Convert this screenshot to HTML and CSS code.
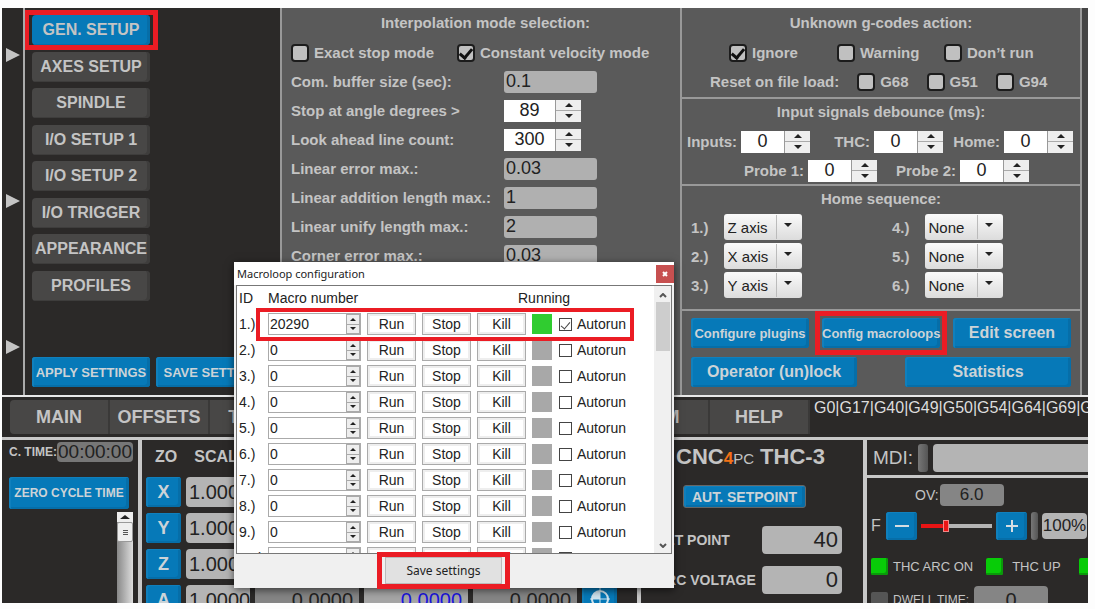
FILE: index.html
```html
<!DOCTYPE html>
<html lang="en">

<head>
    <meta charset="utf-8">
    <meta name="viewport" content="width=device-width, initial-scale=1.0">
    <title>CNC control - general setup</title>
    <link rel="stylesheet" href="styles.css">
</head>

<body>
    <div class="app">
        <main class="setup">
            <div class="rail">
                <span class="rail-arrow"></span>
                <span class="rail-arrow"></span>
                <span class="rail-arrow"></span>
            </div>

            <section class="sidebar">
                <nav class="setup-menu">
                    <button class="menu-item active marked">GEN. SETUP</button>
                    <button class="menu-item">AXES SETUP</button>
                    <button class="menu-item">SPINDLE</button>
                    <button class="menu-item">I/O SETUP 1</button>
                    <button class="menu-item">I/O SETUP 2</button>
                    <button class="menu-item">I/O TRIGGER</button>
                    <button class="menu-item">APPEARANCE</button>
                    <button class="menu-item">PROFILES</button>
                </nav>
                <div class="sidebar-actions">
                    <button class="blue">APPLY SETTINGS</button>
                    <button class="blue">SAVE SETTINGS</button>
                </div>
            </section>

            <section class="interpolation">
                <h2>Interpolation mode selection:</h2>
                <div class="modes">
                    <label class="check"><input type="checkbox">Exact stop mode</label>
                    <label class="check"><input type="checkbox" checked>Constant velocity mode</label>
                </div>
                <div class="row">
                    <label for="buffer">Com. buffer size (sec):</label>
                    <input id="buffer" class="field" type="text" value="0.1">
                </div>
                <div class="row">
                    <label for="angle">Stop at angle degrees &gt;</label>
                    <span class="spinner wide"><input id="angle" type="text" value="89"></span>
                </div>
                <div class="row">
                    <label for="lookahead">Look ahead line count:</label>
                    <span class="spinner wide"><input id="lookahead" type="text" value="300"></span>
                </div>
                <div class="row">
                    <label for="linerror">Linear error max.:</label>
                    <input id="linerror" class="field" type="text" value="0.03">
                </div>
                <div class="row">
                    <label for="linadd">Linear addition length max.:</label>
                    <input id="linadd" class="field" type="text" value="1">
                </div>
                <div class="row">
                    <label for="linunify">Linear unify length max.:</label>
                    <input id="linunify" class="field" type="text" value="2">
                </div>
                <div class="row">
                    <label for="corner">Corner error max.:</label>
                    <input id="corner" class="field" type="text" value="0.03">
                </div>
            </section>

            <section class="options">
                <div class="box gcodes">
                    <h2>Unknown g-codes action:</h2>
                    <div class="actions">
                        <label class="check"><input type="checkbox" checked>Ignore</label>
                        <label class="check"><input type="checkbox">Warning</label>
                        <label class="check"><input type="checkbox">Don’t run</label>
                    </div>
                    <div class="reset">
                        <span>Reset on file load:</span>
                        <label class="check"><input type="checkbox">G68</label>
                        <label class="check"><input type="checkbox">G51</label>
                        <label class="check"><input type="checkbox">G94</label>
                    </div>
                </div>

                <div class="box debounce">
                    <h2>Input signals debounce (ms):</h2>
                    <div class="signals">
                        <label>Inputs: <span class="spinner"><input type="text" value="0"></span></label>
                        <label>THC: <span class="spinner"><input type="text" value="0"></span></label>
                        <label>Home: <span class="spinner"><input type="text" value="0"></span></label>
                    </div>
                    <div class="probes">
                        <label>Probe 1: <span class="spinner"><input type="text" value="0"></span></label>
                        <label>Probe 2: <span class="spinner"><input type="text" value="0"></span></label>
                    </div>
                </div>

                <div class="box home">
                    <h2>Home sequence:</h2>
                    <div class="sequence">
                        <label>1.) <span class="drop"><select><option>Z axis</option></select></span></label>
                        <label>4.) <span class="drop"><select><option>None</option></select></span></label>
                        <label>2.) <span class="drop"><select><option>X axis</option></select></span></label>
                        <label>5.) <span class="drop"><select><option>None</option></select></span></label>
                        <label>3.) <span class="drop"><select><option>Y axis</option></select></span></label>
                        <label>6.) <span class="drop"><select><option>None</option></select></span></label>
                    </div>
                </div>

                <div class="box tools">
                    <div class="tools-row">
                        <button class="blue small">Configure plugins</button>
                        <button class="blue small marked">Config macroloops</button>
                        <button class="blue">Edit screen</button>
                    </div>
                    <div class="tools-row two">
                        <button class="blue">Operator (un)lock</button>
                        <button class="blue">Statistics</button>
                    </div>
                </div>
            </section>
            <div class="edge"></div>
        </main>

        <nav class="tabs">
            <button>MAIN</button>
            <button>OFFSETS</button>
            <button>TOOLS</button>
            <button></button>
            <button></button>
            <button></button>
            <button>CAM</button>
            <button>HELP</button>
            <p class="gstate">G0|G17|G40|G49|G50|G54|G64|G69|G90</p>
        </nav>

        <div class="status">
            <section class="cycle">
                <div class="cycle-time">
                    <label for="ctime">C. TIME:</label>
                    <input id="ctime" type="text" value="00:00:00" readonly>
                </div>
                <button class="blue">ZERO CYCLE TIME</button>
                <div class="log-scroll">
                    <span class="log-up"></span>
                    <span class="log-thumb"></span>
                </div>
            </section>

            <section class="dro">
                <div class="dro-head">
                    <span>ZO</span>
                    <span>SCALE</span>
                </div>
                <div class="axis"><button class="blue">X</button><output class="scale">1.0000</output></div>
                <div class="axis"><button class="blue">Y</button><output class="scale">1.0000</output></div>
                <div class="axis"><button class="blue">Z</button><output class="scale">1.0000</output></div>
                <div class="axis">
                    <button class="blue">A</button>
                    <output class="scale">1.0000</output>
                    <output class="pos">0.0000</output>
                    <output class="pos work">0.0000</output>
                    <output class="pos">0.0000</output>
                    <button class="blue zero" aria-label="Zero axis">
                        <svg width="22" height="22" viewBox="0 0 22 22">
                            <circle cx="11" cy="12" r="8" fill="none" stroke="#cfe3ee" stroke-width="2" />
                            <path d="M11 12V4A8 8 0 0 0 3 12Z" fill="#cfe3ee" />
                            <path d="M11 1V22M1 12H21" stroke="#cfe3ee" stroke-width="1" />
                        </svg>
                    </button>
                </div>
            </section>

            <section class="thc">
                <h1>CNC<em>4</em><small>PC</small> THC-3</h1>
                <button class="blue setpoint">AUT. SETPOINT</button>
                <div class="reading">
                    <label for="sp">SET POINT</label>
                    <input id="sp" type="text" value="40">
                </div>
                <div class="reading">
                    <label for="av">ARC VOLTAGE</label>
                    <input id="av" type="text" value="0">
                </div>
            </section>

            <section class="control">
                <div class="mdi">
                    <label for="mdi">MDI:</label>
                    <span class="lamp"></span>
                    <input id="mdi" type="text">
                </div>
                <div class="override">
                    <label for="ov">OV:</label>
                    <input id="ov" type="text" value="6.0">
                </div>
                <div class="feed">
                    <label for="feed">F</label>
                    <button class="blue" aria-label="Slower">
                        <svg width="16" height="16" viewBox="0 0 16 16"><path d="M1 8H15" stroke="#d4dde2" stroke-width="2" /></svg>
                    </button>
                    <input id="feed" type="range" min="0" max="100" value="34">
                    <button class="blue" aria-label="Faster">
                        <svg width="16" height="16" viewBox="0 0 16 16"><path d="M2 8H14M8 2V14" stroke="#d4dde2" stroke-width="2" /></svg>
                    </button>
                    <span class="lamp"></span>
                    <output>100%</output>
                </div>
                <div class="leds">
                    <span class="led on"></span><span class="led-text">THC ARC ON</span>
                    <span class="led on"></span><span class="led-text up">THC UP</span>
                    <span class="led on"></span>
                </div>
                <div class="dwell">
                    <span class="led"></span>
                    <label for="dwell">DWELL TIME:</label>
                    <input id="dwell" type="text" value="0">
                </div>
            </section>
        </div>

        <section id="modal">
            <header>
                <h3>Macroloop configuration</h3>
                <button class="close" aria-label="Close">
                    <svg width="6" height="6" viewBox="0 0 6 6"><path d="M1 1L5 5M5 1L1 5" stroke="#fff" stroke-width="2" /></svg>
                </button>
            </header>
            <div class="list">
                <table>
                    <colgroup>
                        <col class="c-id">
                        <col class="c-macro">
                        <col class="c-btn">
                        <col class="c-btn">
                        <col class="c-btn">
                        <col class="c-led">
                        <col>
                    </colgroup>
                    <thead>
                        <tr>
                            <th>ID</th>
                            <th>Macro number</th>
                            <th></th>
                            <th></th>
                            <th class="h-running" colspan="3">Running</th>
                        </tr>
                    </thead>
                    <tbody class="macros"></tbody>
                </table>
                <div class="scrollbar">
                    <svg width="8" height="5" viewBox="0 0 8 5"><path d="M1 4L4 1L7 4" fill="none" stroke="#555" stroke-width="2" /></svg>
                    <span class="thumb"></span>
                    <svg width="8" height="5" viewBox="0 0 8 5"><path d="M1 1L4 4L7 1" fill="none" stroke="#555" stroke-width="2" /></svg>
                </div>
            </div>
            <footer>
                <button class="save marked">Save settings</button>
            </footer>
        </section>
    </div>

    <template class="macro-template">
        <tr>
            <td class="data-id"></td>
            <td><span class="spinner"><input class="data-macro" type="text"></span></td>
            <td><button>Run</button></td>
            <td><button>Stop</button></td>
            <td><button>Kill</button></td>
            <td><span class="running"></span></td>
            <td><label><input type="checkbox">Autorun</label></td>
        </tr>
    </template>

    <script>
        let dest = document.querySelector(".macros");
        let temp = document.querySelector(".macro-template");
        let macros = [20290, 0, 0, 0, 0, 0, 0, 0, 0, 0];

        macros.forEach((macro, i) => {
            let klon = temp.content.cloneNode(true);
            klon.querySelector(".data-id").textContent = (i + 1) + ".)";
            klon.querySelector(".data-macro").value = macro;
            klon.querySelector(".data-macro").setAttribute("aria-label", "Macro " + (i + 1));
            if (macro) {
                klon.querySelector("tr").classList.add("marked");
                klon.querySelector(".running").classList.add("on");
                klon.querySelector("[type=checkbox]").checked = true;
            }
            dest.appendChild(klon);
        });

        // up and down buttons for every number box
        document.querySelectorAll(".spinner").forEach(spinner => {
            let input = spinner.querySelector("input");
            let arrows = document.createElement("span");
            arrows.className = "arrows";
            [1, -1].forEach(step => {
                let knap = document.createElement("button");
                knap.className = step > 0 ? "up" : "down";
                knap.setAttribute("aria-label", step > 0 ? "Up" : "Down");
                knap.addEventListener("click", () => {
                    input.value = Number(input.value) + step;
                });
                arrows.appendChild(knap);
            });
            spinner.appendChild(arrows);
        });
    </script>
</body>

</html>
```
FILE: styles.css
```css
* {
    box-sizing: border-box;
}

body {
    margin: 0;
    padding: 8px 7px 6px 2px;
    height: 100vh;
    background-color: #fdfdfd;
    font-family: "Liberation Sans", Arial, sans-serif;
    font-weight: bold;
    font-size: 15px;
    color: #c4c4c4;
}

button,
input,
select {
    font: inherit;
    color: inherit;
    border: none;
    padding: 0;
    margin: 0;
    min-width: 0;
}

h1,
h2,
h3,
p {
    margin: 0;
    font: inherit;
}

.app {
    position: relative;
    height: 100%;
    overflow: hidden;
    display: flex;
    flex-direction: column;
    background-color: #2b2928;
}

.blue {
    height: 30px;
    background-color: #0679b8;
    border-radius: 3px;
    box-shadow: inset 2px 1px 0 #1080bd, inset -3px -2px 0 #066ea8;
    color: #ccd3d7;
    white-space: nowrap;
}

.marked {
    position: relative;
}

.marked::after {
    content: "";
    position: absolute;
    inset: -7px;
    border: 5px solid #eb1c24;
    pointer-events: none;
}

/* setup page */

.setup {
    display: flex;
    height: 389px;
    border-bottom: 2px solid #e8e8e8;
}

.rail {
    flex: none;
    width: 23px;
    border-right: 2px solid #aaa;
    display: flex;
    flex-direction: column;
    gap: 132px;
    padding: 40px 0 0 4px;
}

.rail-arrow {
    width: 0;
    border-left: 14px solid #c4c4c4;
    border-top: 7px solid transparent;
    border-bottom: 7px solid transparent;
}

.sidebar {
    flex: none;
    width: 257px;
    padding: 7px 0 8px 7px;
    display: flex;
    flex-direction: column;
    justify-content: space-between;
    border-right: 2px solid #999;
    overflow: hidden;
}

.setup-menu {
    width: 118px;
    height: 286px;
    display: flex;
    flex-direction: column;
    justify-content: space-between;
}

.menu-item {
    height: 30px;
    background-color: #484746;
    border-radius: 4px;
    box-shadow: inset -3px -1px 0 #3e3d3c;
    font-size: 16px;
    white-space: nowrap;
}

.menu-item.active {
    background-color: #0679b8;
    box-shadow: inset -3px -1px 0 #066ea8;
}

.menu-item.marked::after {
    inset: -5px -8px;
}

.sidebar-actions {
    display: flex;
    gap: 6px;
}

.sidebar-actions .blue {
    flex: 0 0 118px;
    font-size: 13px;
}

.interpolation {
    flex: 1;
    padding-left: 9px;
    background-color: #5a5a5a;
}

h2 {
    height: 30px;
    line-height: 30px;
    text-align: center;
}

.modes,
.row {
    display: flex;
    align-items: center;
    height: 29px;
    white-space: nowrap;
}

.modes {
    gap: 23px;
}

.check {
    display: flex;
    align-items: center;
    gap: 5px;
    white-space: nowrap;
}

.check input {
    appearance: none;
    width: 18px;
    height: 18px;
    border: 2px solid #1c1c1c;
    border-radius: 4px;
    background-color: #c0c0c0;
    display: grid;
    place-items: center;
}

.check input:checked::before {
    content: "";
    width: 5px;
    height: 10px;
    border: solid #111;
    border-width: 0 3px 3px 0;
    transform: rotate(40deg);
}

.row label {
    width: 213px;
}

.field {
    width: 93px;
    height: 22px;
    padding-left: 2px;
    border-radius: 3px;
    background-color: #b0b0b0;
    color: #222;
    font-size: 18px;
    font-weight: normal;
}

.spinner {
    display: inline-flex;
    width: 69px;
    height: 22px;
    background-color: #fff;
}

.spinner.wide {
    width: 77px;
}

.spinner input {
    flex: 1;
    background-color: transparent;
    color: #222;
    font-size: 18px;
    font-weight: normal;
    text-align: center;
}

.arrows {
    width: 26px;
    display: flex;
    flex-direction: column;
    gap: 1px;
    border-left: 1px solid #999;
    background-color: #aaa;
}

.arrows button {
    flex: 1;
    display: grid;
    place-items: center;
    background-color: #eee;
}

.arrows button::before {
    content: "";
    border: solid transparent;
    border-width: 0 4px 4px;
    border-bottom-color: #222;
}

.arrows .down::before {
    border-width: 4px 4px 0;
    border-top-color: #222;
}

.options {
    flex: none;
    width: 402px;
    background-color: #5a5a5a;
    border: solid #999;
    border-width: 0 2px;
}

.box + .box {
    border-top: 2px solid #999;
}

.gcodes {
    height: 89px;
}

.actions,
.reset {
    display: flex;
    align-items: center;
    height: 29px;
}

.actions {
    display: grid;
    grid-template-columns: 108px 107px 1fr;
    padding-left: 47px;
}

.reset {
    gap: 18px;
    padding-left: 28px;
}

.debounce {
    height: 87px;
}

.debounce h2 {
    height: 28px;
    line-height: 26px;
}

.signals,
.probes {
    display: grid;
    align-items: center;
    justify-items: end;
    height: 29px;
    padding-right: 7px;
}

.signals {
    grid-template-columns: 128px 133px 1fr;
}

.probes {
    grid-template-columns: 195px 152px;
}

.signals label,
.probes label {
    display: flex;
    align-items: center;
    gap: 4px;
}

.home {
    height: 125px;
}

.home h2 {
    height: 28px;
    line-height: 26px;
}

.sequence {
    display: grid;
    grid-template-columns: 201px 1fr;
    gap: 3px 0;
    padding-left: 9px;
}

.sequence label {
    display: flex;
    align-items: center;
}

.drop {
    position: relative;
    width: 78px;
    height: 26px;
    margin-left: 15px;
}

.drop select {
    appearance: none;
    width: 100%;
    height: 100%;
    padding: 0 26px 0 4px;
    border-radius: 3px;
    background: linear-gradient(#fafafa, #dcdcdc);
    color: #222;
    font-weight: normal;
}

.drop::before {
    content: "";
    position: absolute;
    inset: 1px 25px 1px auto;
    border-left: 1px solid #bbb;
}

.drop::after {
    content: "";
    position: absolute;
    top: 9px;
    right: 10px;
    border: 4px solid transparent;
    border-top-color: #222;
}

.tools {
    padding: 7px 9px 0;
}

.tools-row {
    display: flex;
    justify-content: space-between;
    margin-bottom: 9px;
}

.tools-row .blue {
    width: 118px;
    font-size: 16px;
}

.tools-row .small {
    font-size: 13px;
}

.tools-row.two .blue {
    width: 166px;
}

.edge {
    flex: none;
    width: 6px;
    background-color: #444;
}

/* tab bar */

.tabs {
    display: flex;
    height: 43px;
    padding: 3px 0 4px 8px;
    border-bottom: 3px solid #c8c8c8;
    overflow: hidden;
}

.tabs button {
    flex: 0 0 100px;
    height: 34px;
    background-color: #484746;
    border-right: 2px solid #3a3938;
    font-size: 18px;
}

.tabs button:first-child {
    border-radius: 4px 0 0 4px;
}

.gstate {
    margin-left: 4px;
    font-size: 16px;
    font-weight: normal;
    line-height: 16px;
    color: #ddd;
}

/* machine status */

.status {
    flex: 1;
    display: flex;
    min-height: 0;
}

.status > section {
    flex: none;
    overflow: hidden;
}

.status > section + section {
    border-left: 4px solid #c8c8c8;
}

.status input,
.status output {
    background-color: #b4b4b4;
    border-radius: 4px;
    color: #222;
    font-size: 20px;
    font-weight: normal;
}

.cycle {
    width: 136px;
    padding: 2px 5px 0 7px;
    display: flex;
    flex-direction: column;
}

.cycle-time {
    display: flex;
    align-items: center;
    justify-content: space-between;
    font-size: 12px;
    white-space: nowrap;
}

.status .cycle-time input {
    width: 77px;
    height: 20px;
    font-size: 19px;
    text-align: center;
    background-color: #777;
}

.cycle .blue {
    width: 120px;
    height: 32px;
    margin: 15px 0 3px;
    font-size: 12px;
}

.log-scroll {
    flex: 1;
    align-self: flex-end;
    width: 16px;
    background: linear-gradient(90deg, #888, #ddd);
    display: flex;
    flex-direction: column;
}

.log-up {
    height: 10px;
    display: grid;
    place-items: center;
    background-color: #eee;
}

.log-up::before {
    content: "";
    border: solid transparent;
    border-width: 0 5px 4px;
    border-bottom-color: #222;
}

.log-thumb {
    height: 20px;
    border: 1px solid #999;
    border-radius: 2px;
    background: repeating-linear-gradient(#555 0 1px, transparent 1px 2px) center / 5px 5px no-repeat, #eee;
}

.dro {
    width: 499px;
    padding: 0 4px;
    display: flex;
    flex-direction: column;
    gap: 6px;
}

.dro-head {
    display: flex;
    gap: 17px;
    height: 31px;
    padding-left: 9px;
    line-height: 34px;
    font-size: 16px;
}

.axis {
    display: flex;
    gap: 5px;
}

.axis .blue {
    width: 35px;
    font-size: 18px;
}

.axis output {
    height: 30px;
    line-height: 30px;
}

.scale {
    width: 64px;
    padding-left: 3px;
}

.axis .pos {
    width: 104px;
    padding-right: 6px;
    border-radius: 0;
    background-color: #858585;
    text-align: right;
}

.axis .pos.work {
    background-color: #a5a5a5;
    color: #1a14e0;
}

.thc {
    width: 226px;
    padding-left: 15px;
}

.thc h1 {
    height: 45px;
    line-height: 34px;
    padding-left: 20px;
    font-size: 22px;
    white-space: nowrap;
}

.thc em {
    font-style: normal;
    font-size: 17px;
    color: #f47216;
}

.thc small {
    font-size: 15px;
    font-weight: normal;
}

.thc .setpoint {
    display: block;
    width: 123px;
    height: 23px;
    margin: 0 0 18px 27px;
    border: 1px solid #666;
    font-size: 14px;
}

.reading {
    display: flex;
    justify-content: space-between;
    align-items: center;
    margin: 0 21px 12px 0;
    font-size: 14px;
    white-space: nowrap;
}

.status .reading input {
    width: 80px;
    height: 28px;
    padding-right: 4px;
    font-size: 22px;
    text-align: right;
}

.status > .control {
    flex: 1;
    font-size: 14px;
    font-weight: normal;
}

.mdi {
    display: flex;
    align-items: center;
    gap: 5px;
    height: 38px;
    padding-left: 6px;
    border-bottom: 3px solid #c8c8c8;
    font-size: 19px;
}

.lamp {
    flex: none;
    width: 10px;
    height: 28px;
    border-radius: 3px;
    background: linear-gradient(90deg, #777, #555);
}

.mdi input {
    flex: 1;
    height: 28px;
    border-radius: 4px 0 0 4px;
}

.override {
    display: flex;
    align-items: center;
    gap: 1px;
    padding: 6px 0 0 48px;
}

.status .override input {
    width: 64px;
    height: 22px;
    background-color: #858585;
    font-size: 17px;
    text-align: center;
}

.feed {
    display: flex;
    align-items: center;
    gap: 4px;
    padding: 6px 1px 0 4px;
}

.feed label {
    width: 11px;
    font-size: 16px;
}

.feed .blue {
    width: 31px;
    height: 28px;
    display: grid;
    place-items: center;
}

.status .feed input {
    appearance: none;
    flex: 1;
    height: 12px;
    border-radius: 0;
    background: linear-gradient(90deg, #e81414 34%, #b4b4b4 34%) center / 100% 4px no-repeat;
}

.feed input::-webkit-slider-thumb {
    appearance: none;
    width: 6px;
    height: 12px;
    border: 1px solid #e88;
    background-color: #e81414;
}

.feed .lamp {
    width: 7px;
}

.status .feed output {
    width: 45px;
    height: 26px;
    line-height: 26px;
    font-size: 17px;
    text-align: center;
}

.leds,
.dwell {
    display: flex;
    align-items: center;
    gap: 5px;
    padding-left: 4px;
    white-space: nowrap;
}

.leds {
    height: 22px;
    margin-top: 15px;
}

.led {
    flex: none;
    width: 17px;
    height: 17px;
    border-radius: 2px;
    background-color: #555;
}

.led.on {
    background-color: #08cc08;
    box-shadow: inset -2px -2px 0 #0a9a0a;
}

.led-text {
    margin-right: 8px;
    font-size: 13px;
}

.led-text.up {
    margin: 0 13px 0 4px;
}

.dwell {
    margin-top: 9px;
    font-size: 12px;
}

.status .dwell input {
    width: 74px;
    height: 28px;
    background-color: #858585;
    text-align: center;
}

/* macroloop window */

#modal {
    position: absolute;
    left: 232px;
    top: 254px;
    width: 440px;
    background-color: #f0f0f0;
    box-shadow: 0 2px 8px rgba(0, 0, 0, .6);
    color: #222;
    font-size: 14px;
    font-weight: normal;
}

#modal header {
    display: flex;
    justify-content: space-between;
    align-items: center;
    height: 23px;
    padding-left: 3px;
    background-color: #fff;
}

#modal h3 {
    font: 11px "Noto Sans", sans-serif;
}

.close {
    width: 18px;
    height: 18px;
    display: grid;
    place-items: center;
    background-color: #c75050;
}

.list {
    display: flex;
    justify-content: space-between;
    height: 269px;
    margin: 0 2px;
    border: 1px solid #777;
    background-color: #fff;
    overflow: hidden;
}

.list table {
    width: 397px;
    margin-left: 2px;
    table-layout: fixed;
    border-collapse: collapse;
    align-self: flex-start;
}

.list th,
.list td {
    height: 26px;
    padding: 0;
    text-align: left;
    font-weight: normal;
    line-height: 20px;
}

.list th {
    height: 25px;
    padding-bottom: 2px;
}

.c-id {
    width: 29px;
}

.c-macro {
    width: 99px;
}

.c-btn {
    width: 55px;
}

.c-led {
    width: 27px;
}

.list .h-running {
    padding-left: 41px;
}

.list td > button {
    display: block;
    width: 49px;
    height: 22px;
    border: 1px solid #aaa;
    box-shadow: inset 0 0 0 2px #eee;
    background-color: #fff;
}

.list .spinner {
    display: flex;
    width: 93px;
    border: 1px solid #aaa;
}

.list .spinner input {
    padding-left: 1px;
    font-size: 14px;
    text-align: left;
}

.list .arrows {
    width: 14px;
    border: 1px solid #aaa;
}

.list .arrows button::before {
    border-width: 0 3px 3px;
}

.list .arrows .down::before {
    border-width: 3px 3px 0;
}

.running {
    display: block;
    width: 20px;
    height: 20px;
    background-color: #a8a8a8;
}

.running.on {
    background-color: #30cc30;
}

.list label {
    display: flex;
    align-items: center;
    gap: 5px;
}

.list [type=checkbox] {
    appearance: none;
    flex: none;
    width: 13px;
    height: 13px;
    border: 1px solid #444;
    display: grid;
    place-items: center;
}

.list [type=checkbox]:checked::before {
    content: "";
    width: 4px;
    height: 8px;
    border: solid #444;
    border-width: 0 1px 1px 0;
    transform: rotate(40deg);
}

.list .marked::after {
    inset: -3px 2px -4px 17px;
    border-width: 4px;
}

.scrollbar {
    width: 17px;
    display: flex;
    flex-direction: column;
    align-items: center;
    padding: 7px 0 5px;
    background-color: #f0f0f0;
}

.thumb {
    width: 14px;
    height: 49px;
    margin: 4px 0 auto;
    background-color: #cdcdcd;
}

#modal footer {
    height: 34px;
    padding: 3px 0 0 151px;
}

.save {
    width: 117px;
    height: 27px;
    border: 1px solid #bbb;
    background-color: #e1e1e1;
    font: 12px "Noto Sans", sans-serif;
}

.save::after {
    inset: -6px -9px;
}
```
